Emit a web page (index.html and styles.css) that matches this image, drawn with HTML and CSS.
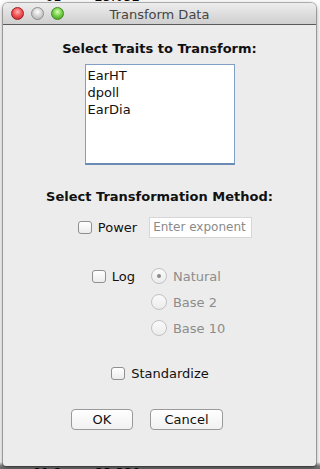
FILE: index.html
```html
<!DOCTYPE html>
<html lang="en">
<head>
    <meta charset="UTF-8">
    <meta name="viewport" content="width=device-width, initial-scale=1.0">
    <title>Transform Data</title>
    <link rel="stylesheet" href="styles.css">
</head>
<body>
    <div class="backdrop">
        <div class="back-row top-row"><span>61</span><span>25.052</span></div>
        <div class="back-row bottom-row"><span>81.2</span><span>33.330</span></div>
    </div>
    <div class="window">
        <div class="titlebar">
            <div class="lights">
                <span class="light red"></span>
                <span class="light gray"></span>
                <span class="light green"></span>
            </div>
            <div class="title">Transform Data</div>
        </div>
        <div class="content">
            <div class="heading">Select Traits to Transform:</div>
            <div class="trait-list">
                <div class="trait">EarHT</div>
                <div class="trait">dpoll</div>
                <div class="trait">EarDia</div>
            </div>
            <div class="heading method">Select Transformation Method:</div>
            <div class="power-row">
                <span class="check"></span>
                <span class="label">Power</span>
                <span class="field">Enter exponent</span>
            </div>
            <div class="log-row">
                <div class="log-check">
                    <span class="check"></span>
                    <span class="label">Log</span>
                </div>
                <div class="radios">
                    <div class="radio-row"><span class="radio on"></span><span class="radio-label">Natural</span></div>
                    <div class="radio-row"><span class="radio"></span><span class="radio-label">Base 2</span></div>
                    <div class="radio-row"><span class="radio"></span><span class="radio-label">Base 10</span></div>
                </div>
            </div>
            <div class="std-row">
                <span class="check"></span>
                <span class="label">Standardize</span>
            </div>
            <div class="buttons">
                <button class="btn ok">OK</button>
                <button class="btn cancel">Cancel</button>
            </div>
        </div>
    </div>
</body>
</html>
```

FILE: styles.css
```css
body {
    margin: 0;
    padding: 0;
    width: 320px;
    height: 469px;
    background: #fff;
    font-family: "DejaVu Sans", sans-serif;
    font-size: 13px;
    position: relative;
    overflow: hidden;
}
.backdrop {
    height: 469px;
    display: flex;
    flex-direction: column;
    justify-content: space-between;
    background: linear-gradient(to bottom, #fff 0, #fff 462px, #7a7a7a 466px, #6e6e6e 469px);
}
.back-row {
    display: flex;
    gap: 33px;
    font-size: 13px;
    line-height: 14px;
    color: #000;
}
.top-row {
    margin-top: -10px;
    padding-left: 45px;
}
.bottom-row {
    margin-bottom: -11px;
    padding-left: 33px;
}
.window {
    position: absolute;
    top: 3px;
    left: 3px;
    width: 313px;
    height: 463px;
    background: #ececec;
    border-radius: 5px 5px 3px 3px;
    box-shadow: 0 0 0 1px rgba(0, 0, 0, 0.25), 0 2px 6px rgba(0, 0, 0, 0.45);
    display: flex;
    flex-direction: column;
    overflow: hidden;
}
.titlebar {
    height: 21px;
    flex-shrink: 0;
    background: linear-gradient(to bottom, #ededed, #cfcfcf);
    border-bottom: 1px solid #5a5a5a;
    position: relative;
    display: flex;
    align-items: center;
    justify-content: center;
}
.lights {
    position: absolute;
    left: 8px;
    top: 4px;
    display: flex;
    gap: 7px;
}
.light {
    width: 13px;
    height: 13px;
    border-radius: 50%;
    box-sizing: border-box;
}
.red {
    background: radial-gradient(circle at 50% 35%, #ffb3b3 0, #f0585a 45%, #b8161a 100%);
    border: 1px solid #a21c1f;
}
.gray {
    background: radial-gradient(circle at 50% 35%, #ffffff 0, #d6d6d6 45%, #a9a9a9 100%);
    border: 1px solid #8e8e8e;
}
.green {
    background: radial-gradient(circle at 50% 35%, #d8ffb8 0, #78d24c 45%, #3a8f1a 100%);
    border: 1px solid #3e8a22;
}
.title {
    color: #444;
    font-size: 13px;
    margin-top: 1px;
}
.content {
    display: flex;
    flex-direction: column;
    align-items: center;
    padding-top: 16px;
}
.heading {
    font-weight: bold;
    font-size: 13px;
    line-height: 16px;
    color: #111;
}
.trait-list {
    margin-top: 7px;
    width: 148px;
    height: 96px;
    background: #fff;
    border: 1px solid #7f9fc4;
    border-bottom: 2px solid #6a8cb4;
    padding-top: 2px;
    box-sizing: content-box;
}
.trait {
    padding-left: 2px;
    line-height: 17px;
    color: #111;
}
.method {
    margin-top: 24px;
}
.power-row {
    margin-top: 12px;
    margin-left: 11px;
    display: flex;
    align-items: center;
}
.check {
    width: 14px;
    height: 13px;
    box-sizing: border-box;
    border: 1px solid #8f8f8f;
    border-radius: 3px;
    background: linear-gradient(to bottom, #fff, #ececec);
    flex-shrink: 0;
}
.label {
    margin-left: 6px;
    color: #111;
}
.field {
    margin-left: 12px;
    width: 103px;
    height: 21px;
    box-sizing: border-box;
    background: #fff;
    border: 1px solid #d6d6d6;
    color: #8a8a8a;
    font-size: 12px;
    line-height: 19px;
    padding-left: 3px;
    white-space: nowrap;
    overflow: hidden;
}
.log-row {
    margin-top: 30px;
    margin-left: -2px;
    display: flex;
    align-items: flex-start;
}
.log-check {
    display: flex;
    align-items: center;
    height: 16px;
}
.radios {
    margin-left: 16px;
    display: flex;
    flex-direction: column;
    gap: 10px;
}
.radio-row {
    display: flex;
    align-items: center;
    height: 16px;
}
.radio {
    width: 16px;
    height: 16px;
    box-sizing: border-box;
    border-radius: 50%;
    border: 1px solid #c2c2c2;
    background: linear-gradient(to bottom, #fafafa, #ececec);
    display: flex;
    align-items: center;
    justify-content: center;
}
.radio.on::after {
    content: "";
    width: 4px;
    height: 4px;
    border-radius: 50%;
    background: #8a8a8a;
}
.radio-label {
    margin-left: 6px;
    color: #8c8c8c;
}
.std-row {
    margin-top: 30px;
    margin-left: 1px;
    display: flex;
    align-items: center;
}
.buttons {
    margin-top: 28px;
    margin-left: -25px;
    display: flex;
    gap: 17px;
}
.btn {
    height: 21px;
    box-sizing: border-box;
    border: 1px solid #9a9a9a;
    border-radius: 4px;
    background: linear-gradient(to bottom, #ffffff, #f1f1f1);
    font-family: "DejaVu Sans", sans-serif;
    font-size: 13px;
    color: #111;
    padding: 0;
}
.ok {
    width: 62px;
}
.cancel {
    width: 73px;
}
```
